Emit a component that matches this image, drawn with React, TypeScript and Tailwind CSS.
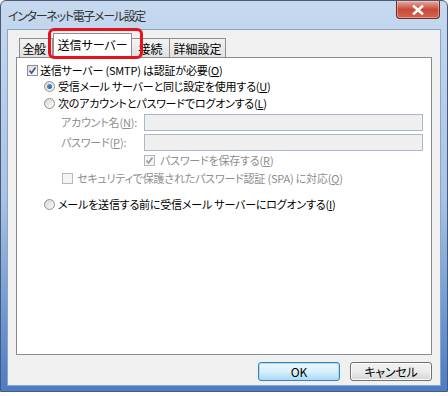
import React from "react";

const font = "font-['Noto_Sans_CJK_JP','Noto_Sans',sans-serif] [font-feature-settings:'palt']";

function Check({ checked, disabled }: { checked?: boolean; disabled?: boolean }) {
  return (
    <span
      className={`relative inline-flex h-[11px] w-[11px] shrink-0 items-center justify-center border ${
        disabled ? "border-[#b8b8b8] bg-[#f4f4f4]" : "border-[#8e8f8f] bg-gradient-to-br from-[#dcdcdc] to-[#fbfbfb]"
      }`}
    >
      {checked && (
        <svg width="9" height="9" viewBox="0 0 9 9">
          <path d="M1.5 4.5 L3.6 7 L7.5 1.5" fill="none" stroke={disabled ? "#9a9a9a" : "#3b4d8f"} strokeWidth="1.6" />
        </svg>
      )}
    </span>
  );
}

function Radio({ checked }: { checked?: boolean }) {
  return (
    <span className="inline-flex h-[11px] w-[11px] shrink-0 items-center justify-center rounded-full border border-[#8e8f8f] bg-gradient-to-br from-[#d6d6d6] to-[#fcfcfc]">
      {checked && <span className="h-[5px] w-[5px] rounded-full bg-gradient-to-br from-[#5aa1d8] to-[#1b5d9a]" />}
    </span>
  );
}

function U({ c }: { c: string }) {
  return (
    <>
      (<span className="underline underline-offset-[1px]">{c}</span>)
    </>
  );
}

export default function App() {
  return (
    <div className={`h-[396px] w-[448px] bg-white ${font}`}>
      <div className="relative flex h-[392px] w-[448px] flex-col rounded-t-[6px] border border-[#4b5a72] bg-gradient-to-b from-[#c6d9ef] via-[#a8c3e6] to-[#4b7cc6]">
        {/* title bar */}
        <div className="flex h-[28px] shrink-0 items-center pl-[7px] pt-[2px] text-[12px] leading-none tracking-[-1.3px] text-[#333]">
          インターネット電子メール設定
        </div>
        <div className="absolute right-[7px] top-[0px] flex h-[18px] w-[44px] items-center justify-center rounded-b-[4px] border border-t-0 border-[#6e2a24] bg-gradient-to-b from-[#e6a89c] via-[#c9493a] to-[#d4644e] shadow-[inset_0_0_0_1px_rgba(255,255,255,0.35)]">
          <svg width="12" height="10" viewBox="0 0 12 10">
            <path d="M2 1.5 L10 8.5 M10 1.5 L2 8.5" stroke="#fff" strokeWidth="2.6" strokeLinecap="square" />
          </svg>
        </div>

        {/* client area */}
        <div className="mx-[6px] mb-[5px] flex flex-1 flex-col border border-[#8ea4c3] bg-[#f0f0f0] px-[8px] text-[11px] leading-none tracking-[-0.2px] text-black">
          {/* tabs */}
          <div className="relative mt-[2px] flex h-[25px] items-end pl-[3px] text-[12px] tracking-normal">
            <div className="flex h-[19px] w-[34px] items-center justify-center border border-b-0 border-[#8c8e94] bg-gradient-to-b from-[#f3f3f3] to-[#e1e1e1] pr-[4px] pt-[1px] tracking-[-0.5px]">
              全般
            </div>
            <div className="relative z-10 -mb-[1px] flex h-[25px] w-[79px] items-center justify-center border border-b-0 border-[#8c8e94] bg-white pb-[2px]">
              送信サーバー
            </div>
            <div className="flex h-[19px] w-[38px] items-center justify-center border border-b-0 border-l-0 border-[#8c8e94] bg-gradient-to-b from-[#f3f3f3] to-[#e1e1e1] pt-[1px]">
              接続
            </div>
            <div className="flex h-[19px] w-[56px] items-center justify-center border border-b-0 border-l-0 border-[#8c8e94] bg-gradient-to-b from-[#f3f3f3] to-[#e1e1e1] pt-[1px]">
              詳細設定
            </div>
            <div className="pointer-events-none absolute left-[32px] top-[-4px] z-20 h-[31px] w-[95px] rounded-[6px] border-[3px] border-[#e8121d]" />
          </div>

          {/* panel */}
          <div className="flex h-[298px] flex-col whitespace-nowrap border border-[#898c95] bg-white pt-[4px]">
            <div className="flex h-[16px] items-center gap-[2px] pl-[10px]">
              <Check checked />
              <span>
                送信サーバー (SMTP) は認証が必要<U c="O" />
              </span>
            </div>
            <div className="flex h-[17px] items-center gap-[3px] pl-[27px]">
              <Radio checked />
              <span>
                受信メール サーバーと同じ設定を使用する<U c="U" />
              </span>
            </div>
            <div className="flex h-[17px] items-center gap-[3px] pl-[27px]">
              <Radio />
              <span>
                次のアカウントとパスワードでログオンする<U c="L" />
              </span>
            </div>
            <div className="mt-[1px] flex h-[18px] items-center pl-[44px] pr-[8px] text-[#8d8d8d]">
              <span className="w-[83px] shrink-0">
                アカウント名<U c="N" />:
              </span>
              <div className="h-[17px] flex-1 border border-[#a9b8ca] bg-[#efefef]" />
            </div>
            <div className="mt-[2px] flex h-[18px] items-center pl-[44px] pr-[8px] text-[#8d8d8d]">
              <span className="w-[83px] shrink-0">
                パスワード<U c="P" />:
              </span>
              <div className="h-[17px] flex-1 border border-[#a9b8ca] bg-[#efefef]" />
            </div>
            <div className="mt-[3px] flex h-[13px] items-center gap-[5px] pl-[127px] text-[#8d8d8d]">
              <Check checked disabled />
              <span>
                パスワードを保存する<U c="R" />
              </span>
            </div>
            <div className="mt-[4px] flex h-[15px] items-center gap-[4px] pl-[45px] text-[#8d8d8d]">
              <Check disabled />
              <span>
                セキュリティで保護されたパスワード認証 (SPA) に対応<U c="Q" />
              </span>
            </div>
            <div className="mt-[10px] flex h-[16px] items-center gap-[3px] pl-[27px]">
              <Radio />
              <span>
                メールを送信する前に受信メール サーバーにログオンする<U c="I" />
              </span>
            </div>
          </div>

          {/* buttons */}
          <div className="mt-[7px] flex justify-end gap-[10px]">
            <button className="flex h-[19px] w-[82px] items-center justify-center rounded-[3px] border border-[#3c7fb1] bg-gradient-to-b from-[#eaf6fd] via-[#d9f0fc] to-[#a7d9f5] text-[12px] leading-none shadow-[inset_0_0_0_1px_#a8e0fb]">
              OK
            </button>
            <button className="flex h-[19px] w-[82px] items-center justify-center rounded-[3px] border border-[#707070] bg-gradient-to-b from-[#f2f2f2] via-[#ebebeb] to-[#d6d6d6] text-[12px] leading-none shadow-[inset_0_0_0_1px_#fcfcfc]">
              キャンセル
            </button>
          </div>
        </div>
      </div>
    </div>
  );
}
